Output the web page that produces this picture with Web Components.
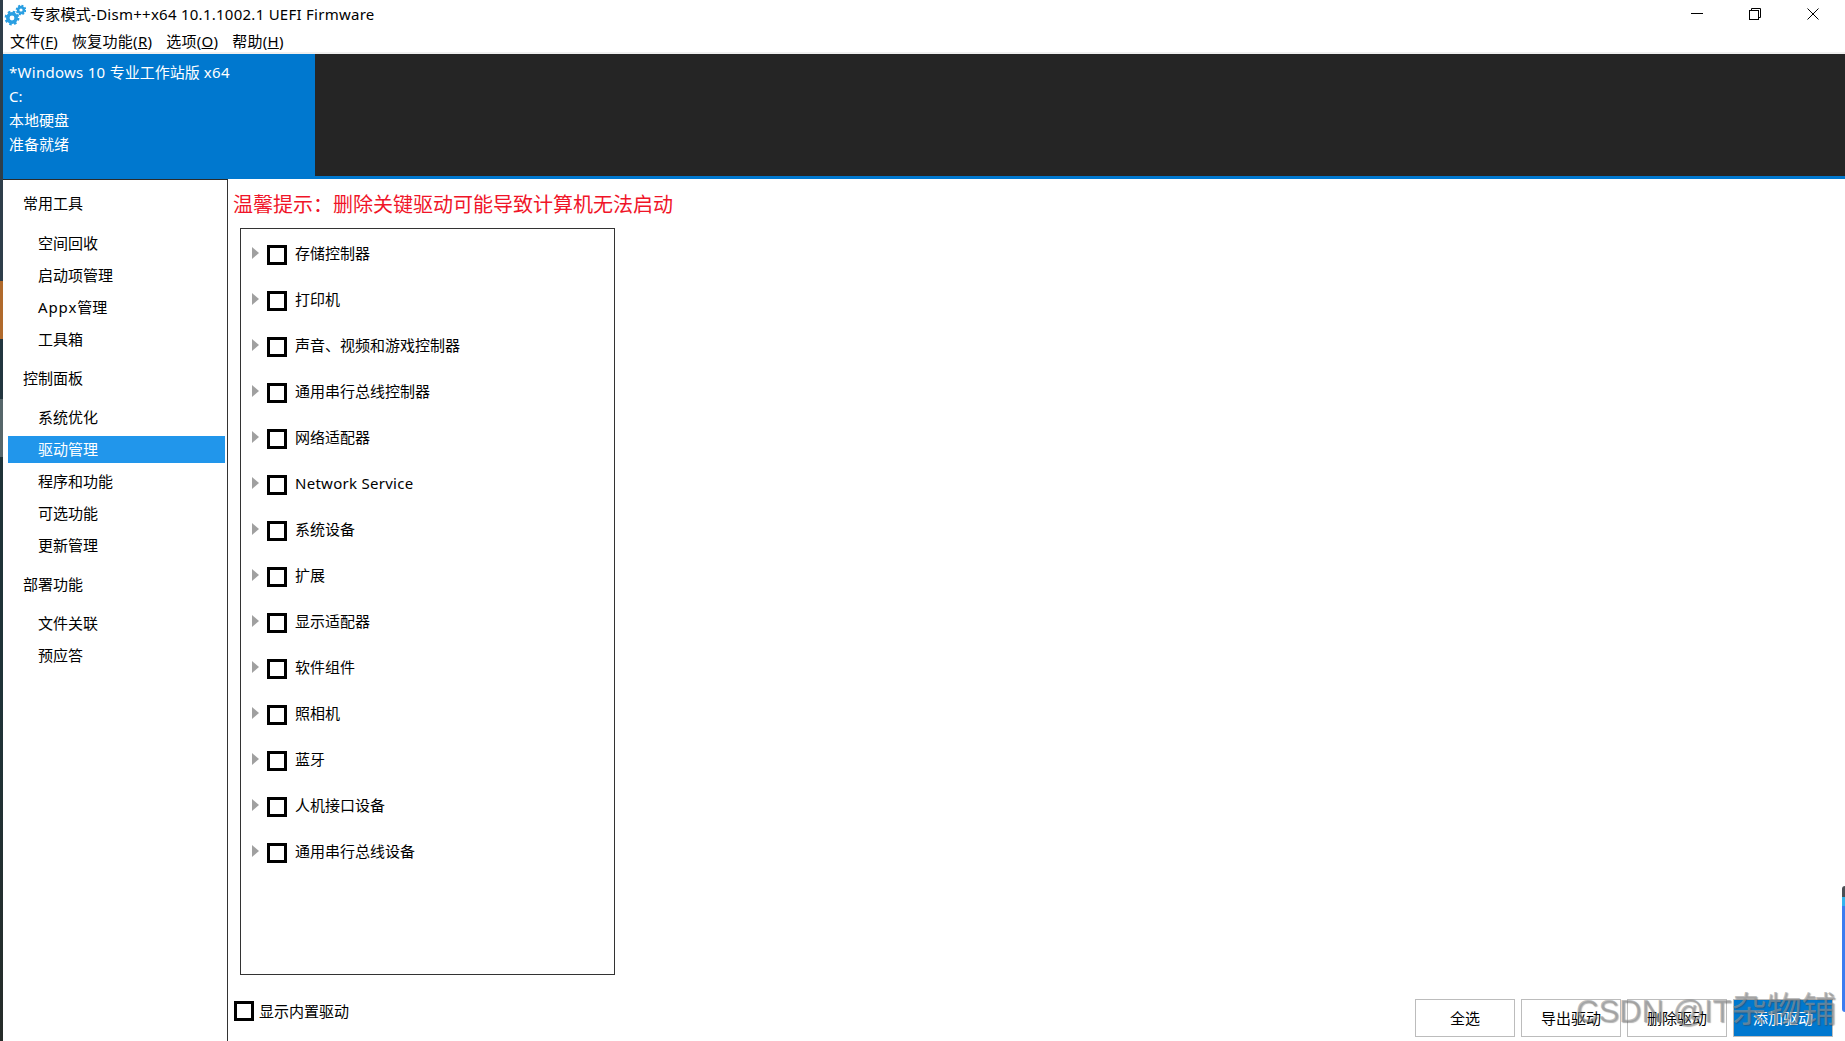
<!DOCTYPE html>
<html lang="zh">
<head>
<meta charset="utf-8">
<title>Dism++</title>
<style>
  html, body { margin: 0; height: 100%; background: #fff; overflow: hidden; }
  body { font: 15px/20px "Noto Sans", "Noto Sans CJK SC", sans-serif; color: #000; }
  .wide { letter-spacing: .28px; }
  .appx { letter-spacing: .9px; }
  .big { font-size: 35px; letter-spacing: 0; }
</style>
</head>
<body>
<app-window>
  <title-bar slot="top">专家模式-Dism++x64 10.1.1002.1 UEFI Firmware</title-bar>
  <menu-bar slot="top">
    <menu-item key="F">文件</menu-item>
    <menu-item key="R">恢复功能</menu-item>
    <menu-item key="O">选项</menu-item>
    <menu-item key="H">帮助</menu-item>
  </menu-bar>
  <status-header slot="top">
    <div><span class="wide">*Windows 10 </span>专业工作站版<span class="wide"> x64</span></div>
    <div>C:</div>
    <div>本地硬盘</div>
    <div>准备就绪</div>
  </status-header>
  <side-nav slot="side">
    <nav-group first>常用工具</nav-group>
    <nav-item>空间回收</nav-item>
    <nav-item>启动项管理</nav-item>
    <nav-item><span class="appx">Appx</span>管理</nav-item>
    <nav-item>工具箱</nav-item>
    <nav-group>控制面板</nav-group>
    <nav-item>系统优化</nav-item>
    <nav-item selected>驱动管理</nav-item>
    <nav-item>程序和功能</nav-item>
    <nav-item>可选功能</nav-item>
    <nav-item>更新管理</nav-item>
    <nav-group>部署功能</nav-group>
    <nav-item>文件关联</nav-item>
    <nav-item>预应答</nav-item>
  </side-nav>
  <driver-page>
    <span slot="notice">温馨提示：删除关键驱动可能导致计算机无法启动</span>
    <tree-row>存储控制器</tree-row>
    <tree-row>打印机</tree-row>
    <tree-row>声音、视频和游戏控制器</tree-row>
    <tree-row>通用串行总线控制器</tree-row>
    <tree-row>网络适配器</tree-row>
    <tree-row><span class="wide">Network Service</span></tree-row>
    <tree-row>系统设备</tree-row>
    <tree-row>扩展</tree-row>
    <tree-row>显示适配器</tree-row>
    <tree-row>软件组件</tree-row>
    <tree-row>照相机</tree-row>
    <tree-row>蓝牙</tree-row>
    <tree-row>人机接口设备</tree-row>
    <tree-row>通用串行总线设备</tree-row>
    <check-box slot="option">显示内置驱动</check-box>
    <action-button slot="action">全选</action-button>
    <action-button slot="action">导出驱动</action-button>
    <action-button slot="action">删除驱动</action-button>
    <action-button slot="action" primary>添加驱动</action-button>
  </driver-page>
</app-window>
<water-mark>CSDN @IT<span class="big">杂物铺</span></water-mark>
<side-bubble></side-bubble>

<script>
function define(name, css, html, setup) {
  customElements.define(name, class extends HTMLElement {
    connectedCallback() {
      if (this.shadowRoot) return
      const shadow = this.attachShadow({ mode: 'open' })
      shadow.innerHTML = `<style>${css}</style>${html}`
      if (setup) setup(this, shadow)
    }
  })
}

define('app-window', `
  :host { display: flex; width: 1845px; height: 1041px; overflow: hidden; }
  .strip { width: 3px; flex: none; background: linear-gradient(#2e3e4a 0, #2e3e4a 281px, #b06a2c 281px, #b06a2c 339px,
    #22363f 339px, #22363f 399px, #56666a 399px, #56666a 457px, #1f3338 457px, #1f3338 700px, #262c29 1041px); }
  .main { flex: 1; display: flex; flex-direction: column; min-width: 0; }
  .body { flex: 1; display: flex; min-height: 0; }
`, `
  <div class="strip"></div>
  <div class="main">
    <slot name="top"></slot>
    <div class="body"><slot name="side"></slot><slot></slot></div>
  </div>
`)

define('title-bar', `
  :host { display: flex; align-items: center; height: 28px; flex: none; background: #fff; }
  svg { display: block; flex: none; }
  .gear { margin: 0 4px 0 1px; }
  .text { flex: 1; white-space: nowrap; letter-spacing: .26px; }
  .ctl { display: flex; gap: 46px; margin-right: 26px; }
`, `
  <svg class="gear" width="22" height="24" viewBox="0 0 22 24" fill="none" stroke="#2a9fe2">
    <circle cx="8" cy="16" r="4.2" stroke-width="3.6"/>
    <circle cx="8" cy="16" r="6.3" stroke-width="2.2" stroke-dasharray="2.5 2.45"/>
    <circle cx="17" cy="8" r="2.9" stroke-width="2.6"/>
    <circle cx="17" cy="8" r="4.4" stroke-width="1.8" stroke-dasharray="1.9 1.55"/>
  </svg>
  <span class="text"><slot></slot></span>
  <div class="ctl">
    <svg width="12" height="12" viewBox="0 0 12 12" fill="none" stroke="#000"><path d="M0 5.5H12"/></svg>
    <svg width="12" height="12" viewBox="0 0 12 12" fill="none" stroke="#000"><rect x=".5" y="2.5" width="9" height="9"/><path d="M2.5 2.5V.5H11.5V9.5H9.5"/></svg>
    <svg width="12" height="12" viewBox="0 0 12 12" fill="none" stroke="#000"><path d="M.5 .5L11.5 11.5M11.5 .5L.5 11.5"/></svg>
  </div>
`)

define('menu-bar', `
  :host { display: flex; gap: 14px; height: 26px; padding: 1px 0 0 7px; box-sizing: border-box; flex: none;
    background: #fff; border-bottom: 2px solid #f0f0f0; }
`, `<slot></slot>`)

define('menu-item', `
  :host { display: block; line-height: 24px; white-space: nowrap; font-size: 15px; letter-spacing: .25px; }
`, `<slot></slot>(<u></u>)`, (el, shadow) => {
  shadow.querySelector('u').textContent = el.getAttribute('key')
})

define('status-header', `
  :host { display: flex; height: 125px; flex: none; background: #0078cf; box-sizing: border-box; padding-bottom: 3px; }
  .info { width: 312px; box-sizing: border-box; padding: 6px 0 0 6px; color: #fff; line-height: 24px; white-space: nowrap; }
  .rest { flex: 1; background: #252525; }
`, `<div class="info"><slot></slot></div><div class="rest"></div>`)

define('side-nav', `
  :host { display: block; width: 225px; flex: none; box-sizing: border-box; background: #fff;
    border-top: 1px solid #2b2b2b; border-right: 1px solid #333; height: 100%; }
`, `<slot></slot>`)

define('nav-group', `
  :host { display: block; height: 46px; line-height: 45px; padding-left: 20px; }
  :host([first]) { height: 48px; line-height: 47px; }
`, `<slot></slot>`)

define('nav-item', `
  :host { display: block; height: 32px; padding: 2px 2px 3px 5px; box-sizing: border-box; }
  .row { height: 27px; line-height: 27px; padding-left: 30px; }
  :host([selected]) .row { background: #2196eb; color: #fff; }
`, `<div class="row"><slot></slot></div>`)

define('driver-page', `
  :host { display: flex; flex-direction: column; flex: 1; min-width: 0; background: #fff; }
  .notice { height: 49px; line-height: 51px; padding-left: 5px; font-size: 20px; color: #f01428; flex: none; }
  .tree { width: 375px; height: 747px; margin-left: 12px; box-sizing: border-box; border: 1px solid #333; padding: 3px 0 0; flex: none; }
  .foot { flex: 1; display: flex; justify-content: space-between; padding: 24px 12px 0 6px; min-height: 0; }
  .acts { display: flex; gap: 6px; }
  .opt { padding-top: 2px; }
`, `
  <div class="notice"><slot name="notice"></slot></div>
  <div class="tree"><slot></slot></div>
  <div class="foot">
    <div class="opt"><slot name="option"></slot></div>
    <div class="acts"><slot name="action"></slot></div>
  </div>
`)

define('tree-row', `
  :host { display: flex; align-items: center; height: 46px; white-space: nowrap; }
  svg { display: block; flex: none; margin: 0 8px 0 11px; position: relative; top: -2px; }
  .box { width: 20px; height: 20px; box-sizing: border-box; border: 3px solid #000; background: #fff; flex: none; margin-right: 8px; }
  .label { position: relative; top: -2px; }
`, `
  <svg width="7" height="12" viewBox="0 0 7 12"><path d="M0 0L7 6L0 12Z" fill="#a0a0a0"/></svg>
  <span class="box"></span>
  <span class="label"><slot></slot></span>
`)

define('check-box', `
  :host { display: flex; align-items: center; height: 20px; white-space: nowrap; }
  .box { width: 20px; height: 20px; box-sizing: border-box; border: 3px solid #000; background: #fff; flex: none; margin-right: 5px; }
`, `<span class="box"></span><slot></slot>`)

define('action-button', `
  :host { display: flex; align-items: center; justify-content: center; width: 100px; height: 38px; box-sizing: border-box;
    border: 1px solid #bcbcbc; background: #fff; }
  :host([primary]) { background: #0078cf; color: #fff; }
`, `<slot></slot>`)

define('water-mark', `
  :host { position: absolute; left: 1576px; top: 988px; white-space: nowrap; font: 31px/44px "Liberation Sans", "Noto Sans CJK SC", sans-serif;
    color: rgba(150,150,150,.6); text-shadow: 1px 1px 1px rgba(60,60,60,.4); pointer-events: none; }
`, `<slot></slot>`)

define('side-bubble', `
  :host { position: absolute; right: 0; top: 886px; width: 3px; height: 126px; border-radius: 3px 0 0 3px; overflow: hidden;
    background: linear-gradient(#4a4f55 0, #4a4f55 11px, #32b4ee 11px, #32b4ee 20px, #3c7df0 20px); }
`, ``)
</script>
</body>
</html>
